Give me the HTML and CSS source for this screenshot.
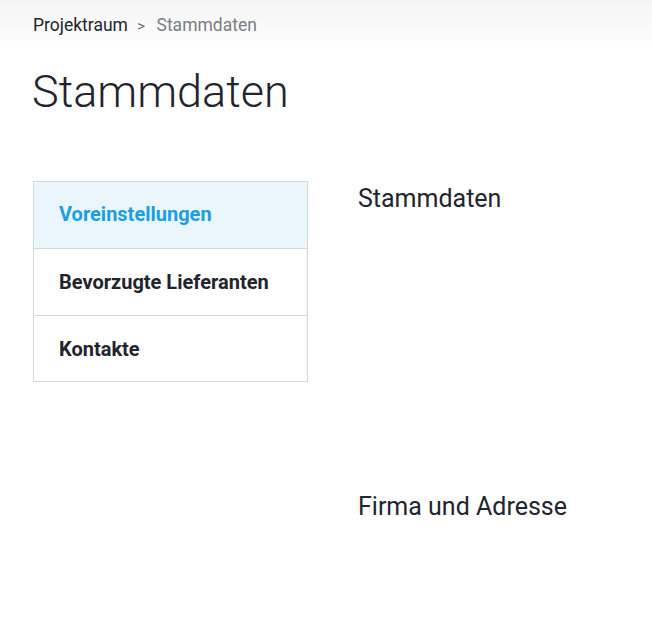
FILE: index.html
```html
<!DOCTYPE html>
<html lang="de">
  <head>
    <meta charset="UTF-8" />
    <title>Stammdaten</title>
    <link rel="stylesheet" href="styles.css">
  </head>
  <body>
    <div class="top-bar">
      <nav class="breadcrumb">
        <a href="#">Projektraum</a>
        <span class="crumb-sep">&gt;</span>
        <span class="crumb-current">Stammdaten</span>
      </nav>
    </div>
    <h1 class="page-title">Stammdaten</h1>
    <div class="page-body">
      <ul class="side-menu">
        <li class="menu-item active">Voreinstellungen</li>
        <li class="menu-item">Bevorzugte Lieferanten</li>
        <li class="menu-item">Kontakte</li>
      </ul>
      <div class="content">
        <h3 class="section-title">Stammdaten</h3>
        <h3 class="section-title second">Firma und Adresse</h3>
      </div>
    </div>
  </body>
</html>
```

FILE: styles.css
```css
body {
  margin: 0;
  font-family: Roboto, "Liberation Sans", sans-serif;
  color: #22242e;
  background: #fff;
}
.top-bar {
  background: linear-gradient(#f4f4f4, #fff 50px);
  padding: 14px 33px 0 33px;
  height: 36px;
}
.breadcrumb {
  font-size: 17.5px;
  line-height: 22px;
}
.breadcrumb a {
  color: #22242e;
  text-decoration: none;
}
.crumb-sep {
  color: #6b6b6b;
  margin: 0 7px 0 5px;
  font-size: 15px;
}
.crumb-current {
  color: #7a7d86;
}
.page-title {
  margin: 16px 0 0 32px;
  font-size: 45px;
  font-weight: 300;
  line-height: 52px;
}
.page-body {
  display: flex;
  align-items: flex-start;
  padding: 63px 33px 0 33px;
}
.side-menu {
  list-style: none;
  margin: 0;
  padding: 0;
  width: 273px;
  border: 1px solid #d6d6d6;
}
.menu-item {
  height: 67px;
  line-height: 66px;
  padding-left: 25px;
  font-size: 20px;
  font-weight: 700;
  border-top: 1px solid #d6d6d6;
  box-sizing: border-box;
}
.menu-item:first-child {
  border-top: none;
  height: 66px;
  line-height: 65px;
}
.menu-item:last-child {
  height: 66px;
}
.menu-item.active {
  color: #1a9fe0;
  background: #eaf5fc;
  border-radius: 4px;
}
.content {
  margin-left: 50px;
}
.section-title {
  margin: 0;
  padding-top: 1px;
  font-size: 25px;
  font-weight: 400;
  line-height: 34px;
}
.section-title.second {
  margin-top: 273px;
}
```
